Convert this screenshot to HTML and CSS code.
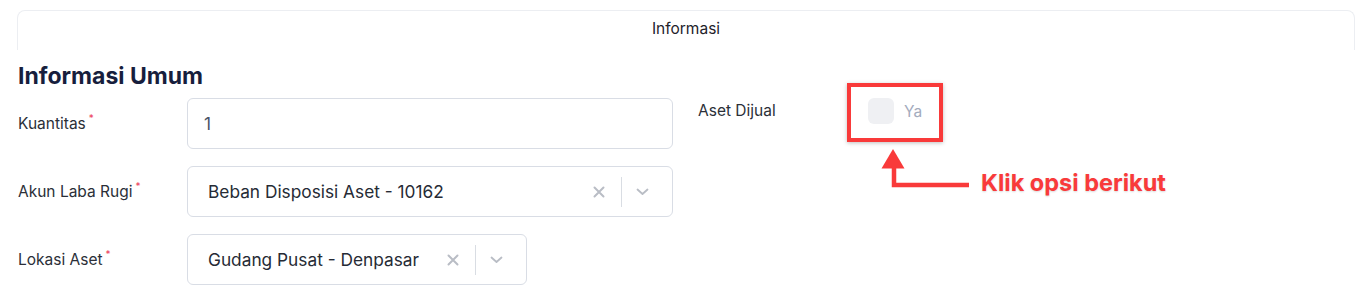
FILE: index.html
```html
<!DOCTYPE html>
<html>
<head>
<meta charset="utf-8">
<link rel="stylesheet" href="styles.css">
</head>
<body>
<div class="page">
  <div class="tabcard"><span class="tab">Informasi</span></div>
  <h2 class="heading">Informasi Umum</h2>
  <div class="form">
    <div class="col">
      <div class="row">
        <label class="label">Kuantitas<span class="req">*</span></label>
        <div class="field input"><span class="val">1</span></div>
      </div>
      <div class="row">
        <label class="label">Akun Laba Rugi<span class="req">*</span></label>
        <div class="field select">
          <span class="sval">Beban Disposisi Aset - 10162</span>
          <span class="ind">
            <svg class="x" width="12" height="12" viewBox="0 0 12 12"><path d="M1.5 1.5L10.5 10.5M10.5 1.5L1.5 10.5" stroke="#b9bdc5" stroke-width="2" stroke-linecap="round"/></svg>
            <span class="div"></span>
            <svg class="chev" width="13" height="8" viewBox="0 0 13 8"><path d="M1.5 1.5L6.5 6L11.5 1.5" fill="none" stroke="#b9bdc5" stroke-width="1.8" stroke-linecap="round" stroke-linejoin="round"/></svg>
          </span>
        </div>
      </div>
      <div class="row">
        <label class="label">Lokasi Aset<span class="req">*</span></label>
        <div class="field select short">
          <span class="sval">Gudang Pusat - Denpasar</span>
          <span class="ind">
            <svg class="x" width="12" height="12" viewBox="0 0 12 12"><path d="M1.5 1.5L10.5 10.5M10.5 1.5L1.5 10.5" stroke="#b9bdc5" stroke-width="2" stroke-linecap="round"/></svg>
            <span class="div"></span>
            <svg class="chev" width="13" height="8" viewBox="0 0 13 8"><path d="M1.5 1.5L6.5 6L11.5 1.5" fill="none" stroke="#b9bdc5" stroke-width="1.8" stroke-linecap="round" stroke-linejoin="round"/></svg>
          </span>
        </div>
      </div>
    </div>
    <div class="col right">
      <div class="rrow">
        <label class="label rlabel">Aset Dijual</label>
        <span class="check"></span>
        <span class="ya">Ya</span>
      </div>
    </div>
  </div>

  <div class="hl"></div>
  <svg class="arrow" width="120" height="50" viewBox="860 145 120 50">
    <polygon points="893,149 881.5,168.5 904.5,168.5" fill="#f93a3a"/>
    <path d="M894 166 V185 H969" fill="none" stroke="#f93a3a" stroke-width="4.5"/>
  </svg>
  <div class="note">Klik opsi berikut</div>
</div>
</body>
</html>
```

FILE: styles.css
```css
* { box-sizing: border-box; }
html, body { margin: 0; padding: 0; background: #fff; }
body {
  font-family: Inter, "Noto Sans", "Liberation Sans", sans-serif;
  color: #2b2f38;
}
.page {
  position: relative;
  width: 1370px;
  height: 293px;
  overflow: hidden;
  padding-top: 10px;
}
.tabcard {
  margin: 0 15px 0 17px;
  height: 40px;
  border: 1px solid #eceef2;
  border-bottom: none;
  border-radius: 8px 8px 0 0;
  display: flex;
  justify-content: center;
  padding-top: 8px;
}
.tab {
  font-size: 15.5px;
  line-height: 20px;
  color: #1f232b;
}
.heading {
  margin: 12px 0 0 18px;
  font-size: 23px;
  line-height: 28px;
  font-weight: 700;
  color: #171e3d;
}
.form {
  display: flex;
  margin: 8px 0 0 18px;
  gap: 25px;
}
.col {
  display: flex;
  flex-direction: column;
  gap: 17px;
}
.row {
  display: flex;
  align-items: center;
}
.label {
  width: 169px;
  font-size: 15.5px;
  line-height: 20px;
  color: #2b2f38;
}
.req {
  color: #ec3d5a;
  font-size: 10px;
  line-height: 0;
  vertical-align: super;
  margin-left: 3px;
}
.field {
  width: 486px;
  height: 51px;
  border: 1px solid #d9dde5;
  border-radius: 6px;
  display: flex;
  align-items: center;
}
.input { padding-left: 16px; }
.val {
  font-size: 17.3px;
  color: #4a5366;
}
.select { padding-left: 20px; padding-right: 23px; }
.select.short { width: 340px; }
.sval {
  flex: 1;
  font-size: 17.3px;
  color: #262b35;
  white-space: nowrap;
}
.ind {
  display: flex;
  align-items: center;
}
.div {
  width: 1px;
  height: 30px;
  background: #d9dde3;
  margin: 0 14px 0 16px;
}
.rrow {
  display: flex;
  align-items: center;
  height: 26px;
}
.rlabel { width: 170px; }
.check {
  width: 26px;
  height: 26px;
  border-radius: 6px;
  background: #eff0f3;
}
.ya {
  margin-left: 10px;
  font-size: 15.5px;
  color: #a3abbd;
}
.hl {
  position: absolute;
  left: 847px;
  top: 83px;
  width: 96px;
  height: 59px;
  border: 4px solid #f93a3a;
  box-shadow: 0 1px 4px rgba(0,0,0,0.25);
}
.arrow {
  position: absolute;
  left: 860px;
  top: 145px;
}
.note {
  position: absolute;
  left: 981px;
  top: 168px;
  font-size: 23.5px;
  line-height: 30px;
  font-weight: 700;
  color: #f93a3a;
  white-space: nowrap;
  text-shadow: 0 1px 2px rgba(0,0,0,0.15);
}
```
